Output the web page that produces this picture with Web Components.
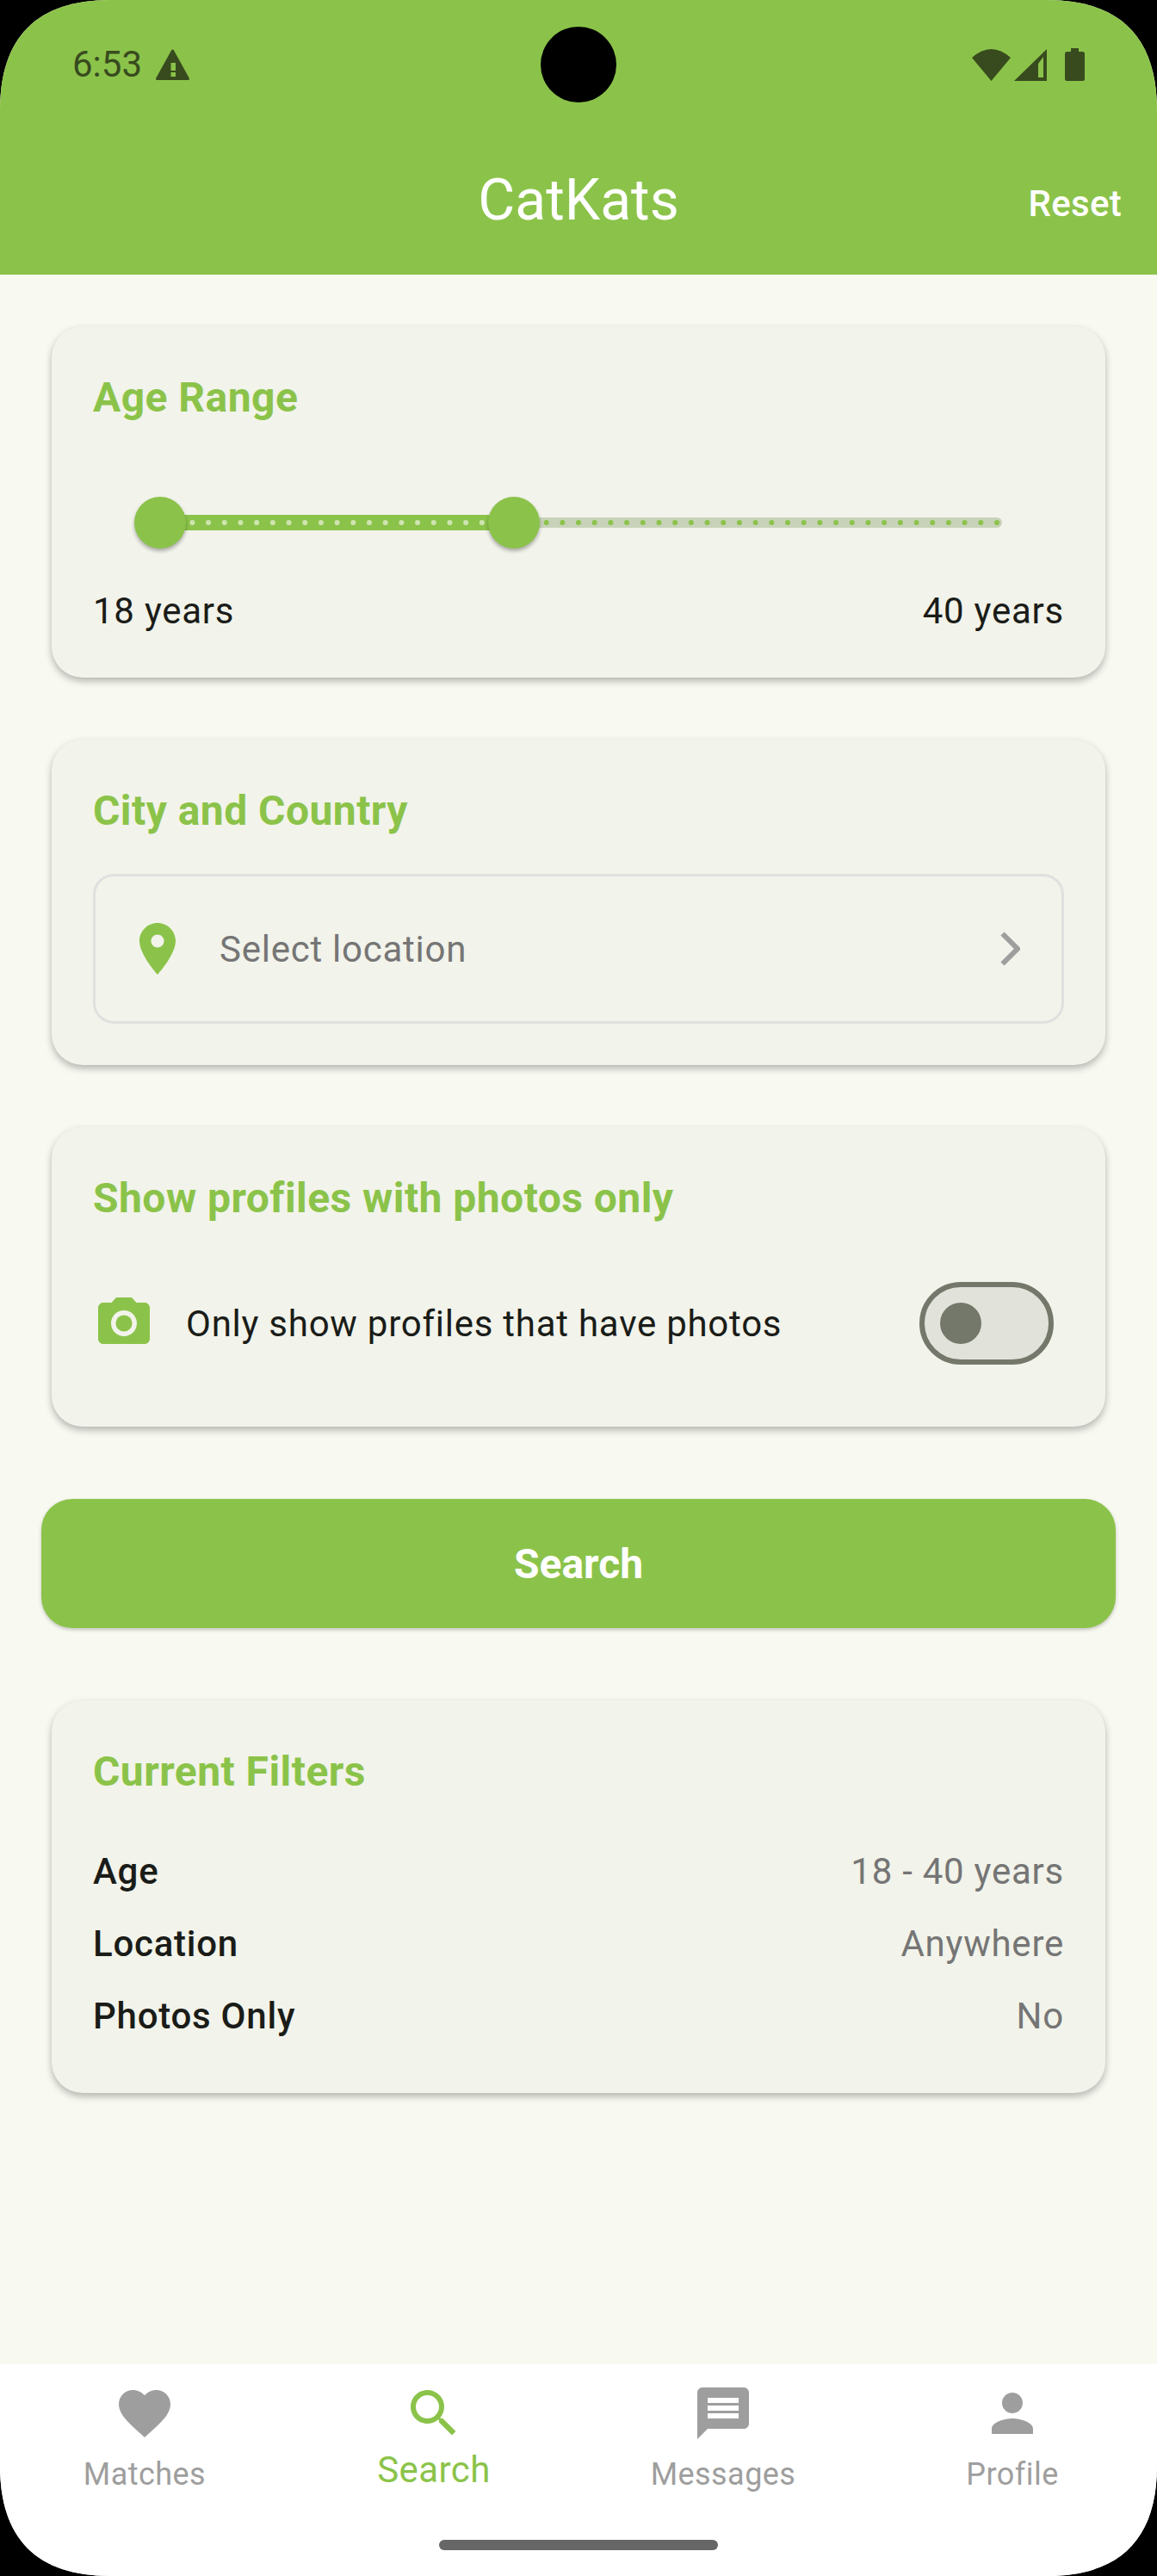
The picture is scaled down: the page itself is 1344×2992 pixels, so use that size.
<!DOCTYPE html>
<html lang="en">
<head>
<meta charset="utf-8">
<title>CatKats</title>
<style>
  html, body { margin: 0; padding: 0; background: #000; }
  body { font-family: Roboto, "Liberation Sans", sans-serif; }
</style>
</head>
<body>
<cat-app>
  <cat-header slot="top" title-text="CatKats" action="Reset" time="6:53"></cat-header>

  <filter-card heading="Age Range">
    <age-slider min="18" max="70" low="18" high="40"></age-slider>
    <range-labels low="18 years" high="40 years"></range-labels>
  </filter-card>

  <filter-card heading="City and Country">
    <location-picker>Select location</location-picker>
  </filter-card>

  <filter-card heading="Show profiles with photos only">
    <photo-toggle>Only show profiles that have photos</photo-toggle>
  </filter-card>

  <search-button>Search</search-button>

  <filter-card heading="Current Filters">
    <filter-row label="Age" value="18 - 40 years"></filter-row>
    <filter-row label="Location" value="Anywhere"></filter-row>
    <filter-row label="Photos Only" value="No"></filter-row>
  </filter-card>

  <bottom-nav slot="bottom">
    <nav-item icon="heart" label="Matches"></nav-item>
    <nav-item icon="search" label="Search" selected></nav-item>
    <nav-item icon="message" label="Messages"></nav-item>
    <nav-item icon="person" label="Profile"></nav-item>
  </bottom-nav>
</cat-app>

<script>
const ICONS = {
  heart: 'M12 21.35l-1.45-1.32C5.4 15.36 2 12.28 2 8.5 2 5.42 4.42 3 7.5 3c1.74 0 3.41.81 4.5 2.09C13.09 3.81 14.76 3 16.5 3 19.58 3 22 5.42 22 8.5c0 3.78-3.4 6.86-8.55 11.54L12 21.35z',
  search: 'M15.5 14h-.79l-.28-.27C15.41 12.59 16 11.11 16 9.5 16 5.91 13.09 3 9.5 3S3 5.91 3 9.5 5.91 16 9.5 16c1.61 0 3.09-.59 4.23-1.57l.27.28v.79l5 4.99L20.49 19l-4.99-5zm-6 0C7.01 14 5 11.99 5 9.5S7.01 5 9.5 5 14 7.01 14 9.5 11.99 14 9.5 14z',
  message: 'M20 2H4c-1.1 0-1.99.9-1.99 2L2 22l4-4h14c1.1 0 2-.9 2-2V4c0-1.1-.9-2-2-2zm-2 12H6v-2h12v2zm0-3H6V9h12v2zm0-3H6V6h12v2z',
  person: 'M12 12c2.21 0 4-1.79 4-4s-1.79-4-4-4-4 1.79-4 4 1.79 4 4 4zm0 2c-2.67 0-8 1.34-8 4v2h16v-2c0-2.66-5.33-4-8-4z',
  pin: 'M12 2C8.13 2 5 5.13 5 9c0 5.25 7 13 7 13s7-7.75 7-13c0-3.87-3.13-7-7-7zm0 9.5c-1.38 0-2.5-1.12-2.5-2.5s1.12-2.5 2.5-2.5 2.5 1.12 2.5 2.5-1.12 2.5-2.5 2.5z',
  camera: 'M9 2L7.17 4H4c-1.1 0-2 .9-2 2v12c0 1.1.9 2 2 2h16c1.1 0 2-.9 2-2V6c0-1.1-.9-2-2-2h-3.17L15 2H9zm3 15c-2.76 0-5-2.24-5-5s2.24-5 5-5 5 2.24 5 5-2.24 5-5 5z',
};

class CatApp extends HTMLElement {
  constructor() {
    super();
    this.attachShadow({ mode: 'open' }).innerHTML = `
      <style>
        :host { display: block; width: 1344px; height: 2992px; }
        .frame {
          display: flex; flex-direction: column;
          height: 100%; overflow: hidden; background: #F8F9F1;
          /* screen corners are a squircle, not a true circle */
          clip-path: path("M0 128C0 43 43 0 128 0H1216C1301 0 1344 43 1344 128V2864C1344 2949 1301 2992 1216 2992H128C43 2992 0 2949 0 2864Z");
        }
        main {
          flex: 1; display: flex; flex-direction: column;
          gap: 72px; padding: 60px 48px 0;
        }
      </style>
      <div class="frame">
        <slot name="top"></slot>
        <main><slot></slot></main>
        <slot name="bottom"></slot>
      </div>`;
  }
}

class CatHeader extends HTMLElement {
  connectedCallback() {
    const root = this.attachShadow({ mode: 'open' });
    root.innerHTML = `
      <style>
        :host {
          display: block; position: relative; height: 319px;
          background: #8BC34A; color: #fff;
        }
        .status {
          height: 150px; box-sizing: border-box; padding: 0 84px;
          display: flex; align-items: center; justify-content: space-between;
          color: #384B1E;
        }
        .status div { display: flex; align-items: center; }
        .time { font-size: 42px; line-height: 50px; margin-right: 16px; }
        .hole {
          position: absolute; left: 628px; top: 31px;
          width: 88px; height: 88px; border-radius: 50%; background: #000;
        }
        .bar {
          height: 169px; padding: 0 41px;
          display: grid; grid-template-columns: 1fr auto 1fr; align-items: center;
        }
        h1 { grid-column: 2; margin: 0 0 3px; font-size: 66px; line-height: 78px; font-weight: 400; }
        button {
          grid-column: 3; justify-self: end; margin-top: 4px; padding: 0; border: 0; background: none;
          color: inherit; font: 500 42px/60px Roboto, sans-serif; letter-spacing: .3px;
        }
        svg { display: block; fill: #384B1E; }
      </style>
      <div class="status">
        <div>
          <span class="time">${this.getAttribute('time')}</span>
          <svg width="39" height="36" viewBox="0 0 39 36">
            <path d="M19.5 2L1.5 34.5h36z" stroke="#384B1E" stroke-width="3" stroke-linejoin="round"/>
            <path d="M17.5 16H23v9h-5.500zM17.500 27H23v5h-5.500z" fill="#8BC34A"/>
          </svg>
        </div>
        <div>
          <svg width="45" height="37" viewBox="0 0 45 37" style="margin-right:4px">
            <path d="M0 10Q22.500-10 45 10L22.500 37z"/>
          </svg>
          <svg width="38" height="37" viewBox="0 0 38 37" style="margin-right:21px">
            <path fill-rule="evenodd" d="M0 37L38 0v37zM28 17v16h6V9z"/>
          </svg>
          <svg width="23" height="38" viewBox="0 0 23 38">
            <path d="M7 0h9v4h4.500Q23 4 23 6.500v29q0 2.500-2.500 2.500h-18Q0 38 0 35.500v-29Q0 4 2.500 4H7z"/>
          </svg>
        </div>
      </div>
      <div class="hole"></div>
      <div class="bar">
        <h1>${this.getAttribute('title-text')}</h1>
        <button type="button">${this.getAttribute('action')}</button>
      </div>`;
  }
}

class FilterCard extends HTMLElement {
  connectedCallback() {
    const root = this.attachShadow({ mode: 'open' });
    root.innerHTML = `
      <style>
        :host {
          display: block; margin: 0 12px; padding: 48px;
          background: #F2F3EA; border-radius: 36px;
          box-shadow: 0 4px 9px rgba(0, 0, 0, .28);
          color: #1A1C18;
        }
        h2 {
          margin: 0 0 38px; font-size: 48px; line-height: 70px;
          font-weight: 700; letter-spacing: .45px; color: #8BC34A;
        }
        .body { display: flex; flex-direction: column; }
      </style>
      <h2>${this.getAttribute('heading')}</h2>
      <div class="body"><slot></slot></div>`;
  }
}

class AgeSlider extends HTMLElement {
  connectedCallback() {
    const min = Number(this.getAttribute('min'));
    const max = Number(this.getAttribute('max'));
    const low = Number(this.getAttribute('low'));
    const high = Number(this.getAttribute('high'));
    const start = 78;
    const end = 1050;
    const x = (v) => start + ((v - min) / (max - min)) * (end - start);

    let dots = '';
    for (let v = min; v <= max; v += 1) {
      const fill = v >= low && v <= high ? '#CFE5B0' : '#8BC34A';
      dots += `<circle cx="${x(v).toFixed(2)}" cy="72" r="3" fill="${fill}"/>`;
    }

    const root = this.attachShadow({ mode: 'open' });
    root.innerHTML = `
      <style>
        :host { display: block; position: relative; height: 144px; }
        svg { display: block; }
        .thumb {
          position: absolute; top: 42px; width: 60px; height: 60px; margin-left: -30px;
          border-radius: 50%; background: #8BC34A;
          box-shadow: 0 3px 4px rgba(0, 0, 0, .3);
        }
      </style>
      <svg width="1128" height="144" viewBox="0 0 1128 144">
        <rect x="${x(high)}" y="66" width="${1056 - x(high)}" height="12" rx="6" fill="#C8D2B8"/>
        <rect x="${x(low)}" y="63" width="${x(high) - x(low)}" height="18" fill="#8BC34A"/>
        ${dots}
      </svg>
      <div class="thumb" style="left:${x(low)}px"></div>
      <div class="thumb" style="left:${x(high)}px"></div>`;
  }
}

class RangeLabels extends HTMLElement {
  connectedCallback() {
    const root = this.attachShadow({ mode: 'open' });
    root.innerHTML = `
      <style>
        :host {
          display: flex; justify-content: space-between; padding-top: 1px; margin-bottom: -1px;
          font-size: 42px; line-height: 60px; letter-spacing: .75px;
        }
      </style>
      <span>${this.getAttribute('low')}</span>
      <span>${this.getAttribute('high')}</span>`;
  }
}

class LocationPicker extends HTMLElement {
  constructor() {
    super();
    this.attachShadow({ mode: 'open' }).innerHTML = `
      <style>
        :host {
          display: flex; align-items: center; gap: 36px;
          padding: 48px 48px 48px 36px;
          border: 3px solid #E0E0E0; border-radius: 24px;
          font-size: 42px; line-height: 72px; letter-spacing: .75px; color: #757575;
        }
        .label { flex: 1; padding-top: 2px; line-height: 70px; }
        svg { display: block; flex: none; }
      </style>
      <svg width="72" height="72" viewBox="0 0 24 24" fill="#8BC34A"><path d="${ICONS.pin}"/></svg>
      <span class="label"><slot></slot></span>
      <svg width="23" height="40" viewBox="0 0 23 40" fill="none" stroke="#9E9E9E" stroke-width="6">
        <path d="M2.500 2.500L20 20 2.500 37.500"/>
      </svg>`;
  }
}

class PhotoToggle extends HTMLElement {
  constructor() {
    super();
    this.attachShadow({ mode: 'open' }).innerHTML = `
      <style>
        :host {
          display: flex; align-items: center; gap: 36px; height: 144px;
          font-size: 42px; letter-spacing: .75px;
        }
        .label { flex: 1; }
        svg { display: block; flex: none; }
        .switch {
          box-sizing: border-box; width: 156px; height: 96px; margin-right: 12px;
          padding: 18px; border: 6px solid #74786A; border-radius: 48px; background: #E1E3DA;
        }
        .knob { width: 48px; height: 48px; border-radius: 50%; background: #74786A; }
      </style>
      <svg width="72" height="72" viewBox="0 0 24 24" fill="#8BC34A">
        <circle cx="12" cy="12" r="3.200"/><path d="${ICONS.camera}"/>
      </svg>
      <span class="label"><slot></slot></span>
      <div class="switch"><div class="knob"></div></div>`;
  }
}

class SearchButton extends HTMLElement {
  constructor() {
    super();
    this.attachShadow({ mode: 'open' }).innerHTML = `
      <style>
        :host {
          display: flex; align-items: center; justify-content: center;
          height: 150px; margin: 12px 0;
          background: #8BC34A; border-radius: 36px;
          box-shadow: 0 2px 4px rgba(0, 0, 0, .22);
          color: #fff; font-size: 48px; font-weight: 700;
        }
      </style>
      <slot></slot>`;
  }
}

class FilterRow extends HTMLElement {
  connectedCallback() {
    const root = this.attachShadow({ mode: 'open' });
    root.innerHTML = `
      <style>
        :host {
          display: flex; justify-content: space-between; padding: 13px 0 11px;
          font-size: 42px; line-height: 60px; letter-spacing: .75px;
        }
        .label { font-weight: 500; }
        .value { color: #757575; }
      </style>
      <span class="label">${this.getAttribute('label')}</span>
      <span class="value">${this.getAttribute('value')}</span>`;
  }
}

class BottomNav extends HTMLElement {
  constructor() {
    super();
    this.attachShadow({ mode: 'open' }).innerHTML = `
      <style>
        :host {
          display: block; height: 246px; box-sizing: border-box; padding-top: 21px;
          background: #fff;
        }
        .items { display: grid; grid-template-columns: repeat(4, 1fr); height: 183px; }
        .handle {
          width: 324px; height: 12px; margin: 0 auto;
          border-radius: 6px; background: #666;
        }
      </style>
      <div class="items"><slot></slot></div>
      <div class="handle"></div>`;
  }
}

class NavItem extends HTMLElement {
  connectedCallback() {
    const active = this.hasAttribute('selected');
    const root = this.attachShadow({ mode: 'open' });
    root.innerHTML = `
      <style>
        :host {
          display: flex; flex-direction: column; align-items: center;
          color: ${active ? '#8BC34A' : '#9E9E9E'};
        }
        svg { display: block; fill: currentColor; }
        span {
          margin-top: ${active ? 2 : 11}px;
          font-size: ${active ? 42 : 36}px; line-height: ${active ? 56 : 48}px;
          letter-spacing: .45px;
        }
      </style>
      <svg width="72" height="72" viewBox="0 0 24 24"><path d="${ICONS[this.getAttribute('icon')]}"/></svg>
      <span>${this.getAttribute('label')}</span>`;
  }
}

customElements.define('cat-app', CatApp);
customElements.define('cat-header', CatHeader);
customElements.define('filter-card', FilterCard);
customElements.define('age-slider', AgeSlider);
customElements.define('range-labels', RangeLabels);
customElements.define('location-picker', LocationPicker);
customElements.define('photo-toggle', PhotoToggle);
customElements.define('search-button', SearchButton);
customElements.define('filter-row', FilterRow);
customElements.define('bottom-nav', BottomNav);
customElements.define('nav-item', NavItem);
</script>
</body>
</html>
